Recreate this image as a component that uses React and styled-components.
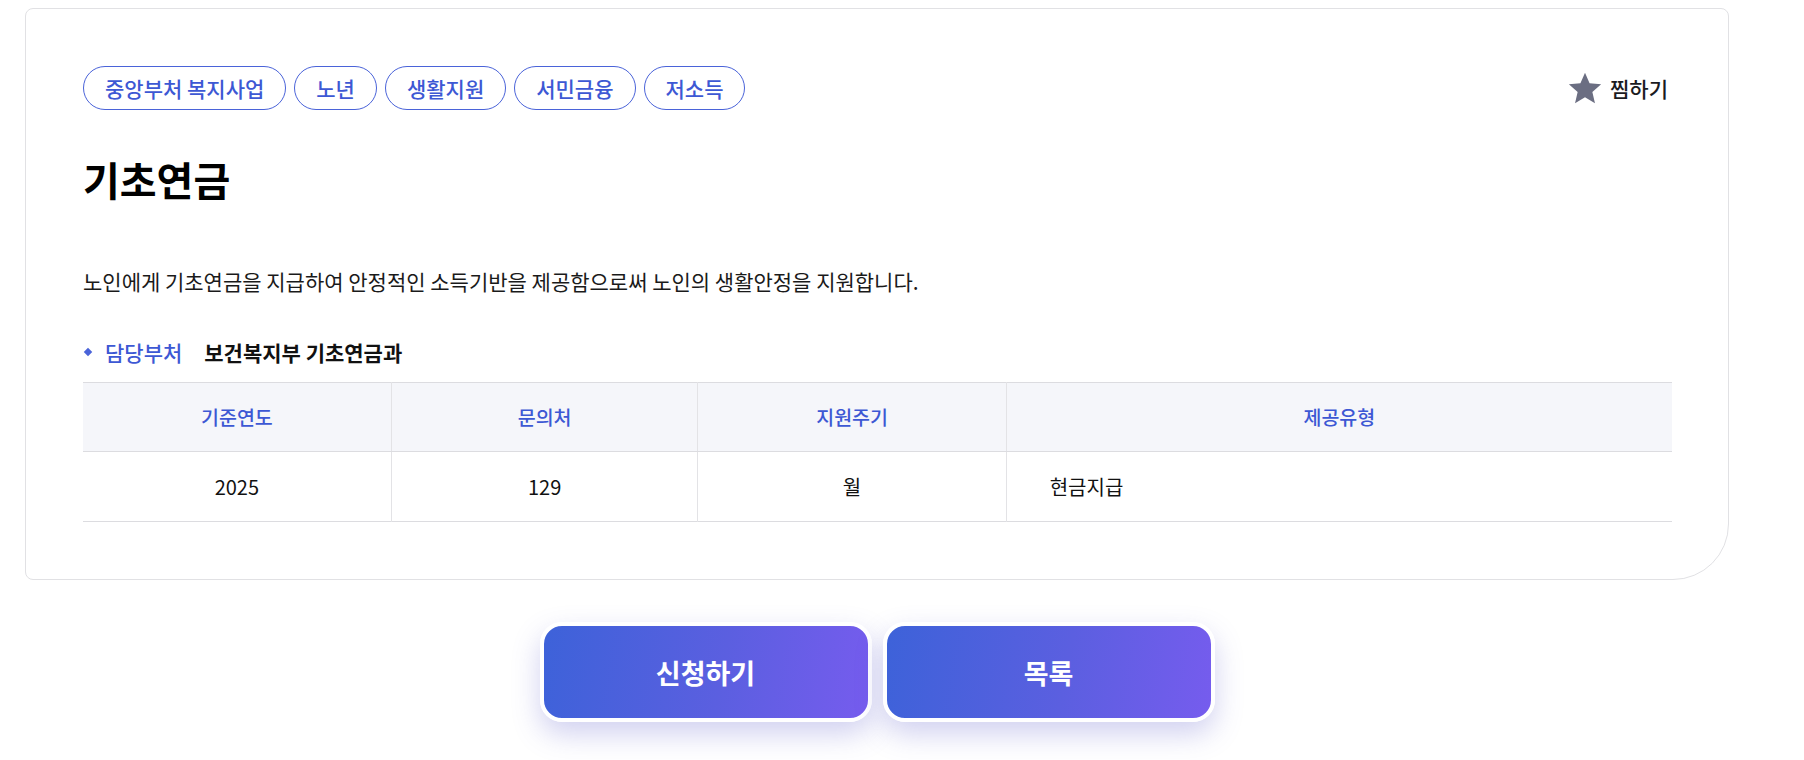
import React from "react";
import styled, { createGlobalStyle } from "styled-components";

const GlobalStyle = createGlobalStyle`
  body {
    margin: 0;
    background: #fff;
    font-family: "Noto Sans CJK KR", "Noto Sans", sans-serif;
    color: #111;
  }
`;

const tags = ["중앙부처 복지사업", "노년", "생활지원", "서민금융", "저소득"];

const columns = [
  { head: "기준연도", value: "2025" },
  { head: "문의처", value: "129" },
  { head: "지원주기", value: "월" },
  { head: "제공유형", value: "현금지급", left: true },
];

const StarIcon = () => (
  <svg width="36" height="36" viewBox="0 0 24 24">
    <path
      d="M12 1.8l3.05 7.1 7.7.65-5.85 5.05 1.75 7.55L12 18.1l-6.65 4.05 1.75-7.55L1.25 9.55l7.7-.65z"
      fill="#6b6e82"
    />
  </svg>
);

const App = () => {
  return (
    <Page>
      <GlobalStyle />
      <Card>
        <TopRow>
          <TagList>
            {tags.map((t) => (
              <Tag key={t}>{t}</Tag>
            ))}
          </TagList>
          <WishButton>
            <StarIcon />
            <span>찜하기</span>
          </WishButton>
        </TopRow>
        <Title>기초연금</Title>
        <Desc>
          노인에게 기초연금을 지급하여 안정적인 소득기반을 제공함으로써 노인의
          생활안정을 지원합니다.
        </Desc>
        <DeptRow>
          <DeptLabel>담당부처</DeptLabel>
          <DeptName>보건복지부 기초연금과</DeptName>
        </DeptRow>
        <InfoTable>
          <colgroup>
            <col style={{ width: "19.4%" }} />
            <col style={{ width: "19.3%" }} />
            <col style={{ width: "19.4%" }} />
            <col />
          </colgroup>
          <thead>
            <tr>
              {columns.map((c) => (
                <HeadCell key={c.head}>{c.head}</HeadCell>
              ))}
            </tr>
          </thead>
          <tbody>
            <tr>
              {columns.map((c) => (
                <BodyCell key={c.head} $left={c.left}>
                  {c.value}
                </BodyCell>
              ))}
            </tr>
          </tbody>
        </InfoTable>
      </Card>
      <ButtonRow>
        <ActionButton>신청하기</ActionButton>
        <ActionButton>목록</ActionButton>
      </ButtonRow>
    </Page>
  );
};

const Page = styled.div`
  width: 1704px;
  padding: 8px 0 40px 25px;
`;

const Card = styled.section`
  border: 1px solid #e1e1e4;
  border-radius: 8px 8px 56px 8px;
  padding: 57px 56px 57px 57px;
  background: #fff;
`;

const TopRow = styled.div`
  display: flex;
  justify-content: space-between;
  align-items: center;
`;

const TagList = styled.div`
  display: flex;
  gap: 8px;
`;

const Tag = styled.span`
  display: inline-flex;
  align-items: center;
  height: 44px;
  box-sizing: border-box;
  padding: 0 21px;
  border: 1px solid #4a63d9;
  border-radius: 22px;
  color: #3d58d4;
  font-size: 21px;
  font-weight: 500;
`;

const WishButton = styled.button`
  display: flex;
  align-items: center;
  gap: 7px;
  margin-right: 4px;
  padding: 0;
  border: none;
  background: none;
  font-family: inherit;
  font-size: 21px;
  font-weight: 500;
  color: #1b1b1f;
  cursor: pointer;
`;

const Title = styled.h2`
  margin: 43px 0 0;
  font-size: 40px;
  font-weight: 700;
  line-height: 52px;
  color: #000;
`;

const Desc = styled.p`
  margin: 61px 0 0;
  font-size: 21px;
  line-height: 30px;
  color: #1a1a1a;
`;

const DeptRow = styled.div`
  display: flex;
  align-items: center;
  gap: 22px;
  margin-top: 41px;
  font-size: 21px;
  line-height: 30px;
`;

const DeptLabel = styled.span`
  position: relative;
  padding-left: 22px;
  color: #3d58d4;
  font-weight: 500;

  &::before {
    content: "";
    position: absolute;
    left: 2px;
    top: 12px;
    width: 6px;
    height: 6px;
    background: #4a63d9;
    transform: rotate(45deg);
  }
`;

const DeptName = styled.span`
  font-weight: 700;
  color: #111;
`;

const InfoTable = styled.table`
  width: 100%;
  margin-top: 15px;
  border-collapse: collapse;
  table-layout: fixed;
  border-top: 1px solid #dcdce0;
  border-bottom: 1px solid #dcdce0;
  font-size: 20px;
`;

const HeadCell = styled.th`
  height: 68px;
  padding: 0;
  background: #f5f6fa;
  border-bottom: 1px solid #dcdce0;
  border-left: 1px solid #e3e3e6;
  color: #3d58d4;
  font-size: 19.5px;
  font-weight: 500;
  line-height: 28px;
  text-align: center;

  &:first-child {
    border-left: none;
  }
`;

const BodyCell = styled.td`
  height: 69px;
  border-left: 1px solid #e3e3e6;
  color: #111;
  line-height: 28px;
  text-align: ${(p) => (p.$left ? "left" : "center")};
  padding: ${(p) => (p.$left ? "0 0 0 43px" : "0")};

  &:first-child {
    border-left: none;
  }
`;

const ButtonRow = styled.div`
  display: flex;
  justify-content: center;
  gap: 11px;
  margin-top: 42px;
`;

const ActionButton = styled.button`
  width: 332px;
  height: 100px;
  box-sizing: border-box;
  border: 4px solid #fff;
  border-radius: 22px;
  background: linear-gradient(100deg, #3d62d9 0%, #5b5fe0 55%, #765cee 100%);
  box-shadow: 0 12px 28px rgba(90, 90, 200, 0.28);
  color: #fff;
  font-family: inherit;
  font-size: 27px;
  font-weight: 700;
  cursor: pointer;
`;

export default App;
